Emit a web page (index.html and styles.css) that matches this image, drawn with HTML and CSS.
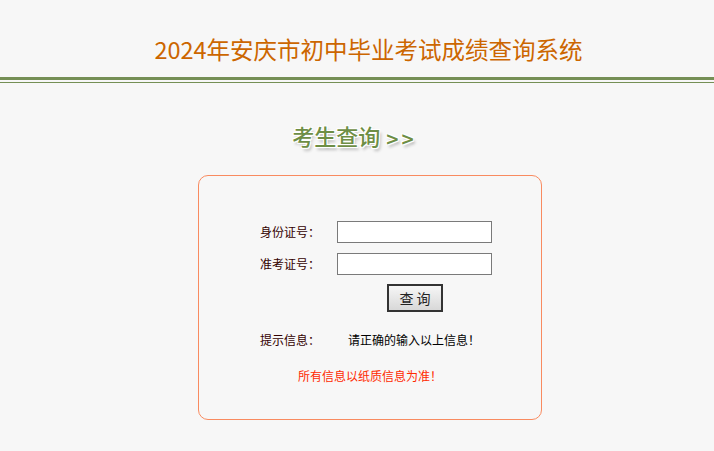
FILE: index.html
```html
<!doctype html>
<html>

<head>
    <meta charset="UTF-8">
    <title>2024年安庆市初中毕业考试成绩查询系统</title>
    <link rel="stylesheet" href="styles.css">
</head>

<body>
    <header class="top">
        <h1>2024年安庆市初中毕业考试成绩查询系统</h1>
    </header>
    <div class="rule"></div>
    <div class="main">
        <h2 class="subtitle">考生查询 <span class="arrows">&gt;&gt;</span></h2>
        <div class="box">
            <form class="form" onsubmit="return false">
                <label for="sfz">身份证号：</label>
                <input type="text" id="sfz">
                <label for="zkz">准考证号：</label>
                <input type="text" id="zkz">
                <span></span>
                <button type="button">查 询</button>
            </form>
            <div class="tip">
                <span class="tip-label">提示信息：</span>
                <span class="tip-msg">请正确的输入以上信息！</span>
            </div>
            <p class="note">所有信息以纸质信息为准！</p>
        </div>
    </div>
</body>

</html>
```

FILE: styles.css
```css
body {
    margin: 0;
    padding: 0;
    background-color: #f7f7f7;
    font-family: "Noto Sans CJK SC", "DejaVu Sans", sans-serif;
    font-size: 12px;
}
* {
    box-sizing: border-box;
}

/* En-tête */
.top {
    padding: 34px 0 0 23px;
}
.top h1 {
    margin: 0;
    height: 30px;
    line-height: 30px;
    font-size: 23.5px;
    font-weight: normal;
    text-align: center;
    color: #cc6600;
}
.rule {
    box-sizing: content-box;
    height: 2px;
    margin-top: 13px;
    border-top: 3px solid #758f55;
    border-bottom: 1px solid #758f55;
}

/* Zone principale */
.main {
    padding-left: 26px;
}
.subtitle {
    margin: 37px 0 0 0;
    padding-right: 32px;
    height: 30px;
    line-height: 30px;
    font-size: 22px;
    font-weight: 500;
    text-align: center;
    color: #6e8e45;
    text-shadow: -1px -1px 0 #fff, 1px -1px 0 #fff, -1px 1px 0 #fff, 1px 1px 0 #fff, 2px 3px 3px #b8b8b8;
}
.subtitle .arrows {
    font-family: "DejaVu Sans", sans-serif;
    font-weight: bold;
    font-size: 17px;
    letter-spacing: 1px;
}

.box {
    width: 344px;
    height: 245px;
    margin: 25px auto 0 auto;
    padding: 45px 0 0 61px;
    border: 1px solid #f98b60;
    border-radius: 10px;
}

.form {
    display: grid;
    grid-template-columns: 77px 155px;
    row-gap: 10px;
    align-items: center;
}
.form label {
    color: #330000;
    line-height: 16px;
}
.form input {
    width: 155px;
    height: 22px;
    margin: 0;
    border: 1px solid #7a7a7a;
    background-color: #fff;
    font-size: 12px;
}
.form button {
    width: 56px;
    height: 28px;
    margin: -1px 0 0 50px;
    padding: 0;
    border: 2px solid #333;
    background: linear-gradient(#f6f6f6, #d8d8d8);
    font-family: inherit;
    font-size: 14px;
    color: #222;
    cursor: pointer;
}

.tip {
    display: grid;
    grid-template-columns: 88px auto;
    margin-top: 20px;
    line-height: 16px;
}
.tip-label {
    color: #330000;
}
.tip-msg {
    color: #000;
}

.note {
    margin: 20px 0 0 -61px;
    line-height: 16px;
    text-align: center;
    color: #ff2a00;
}
```
